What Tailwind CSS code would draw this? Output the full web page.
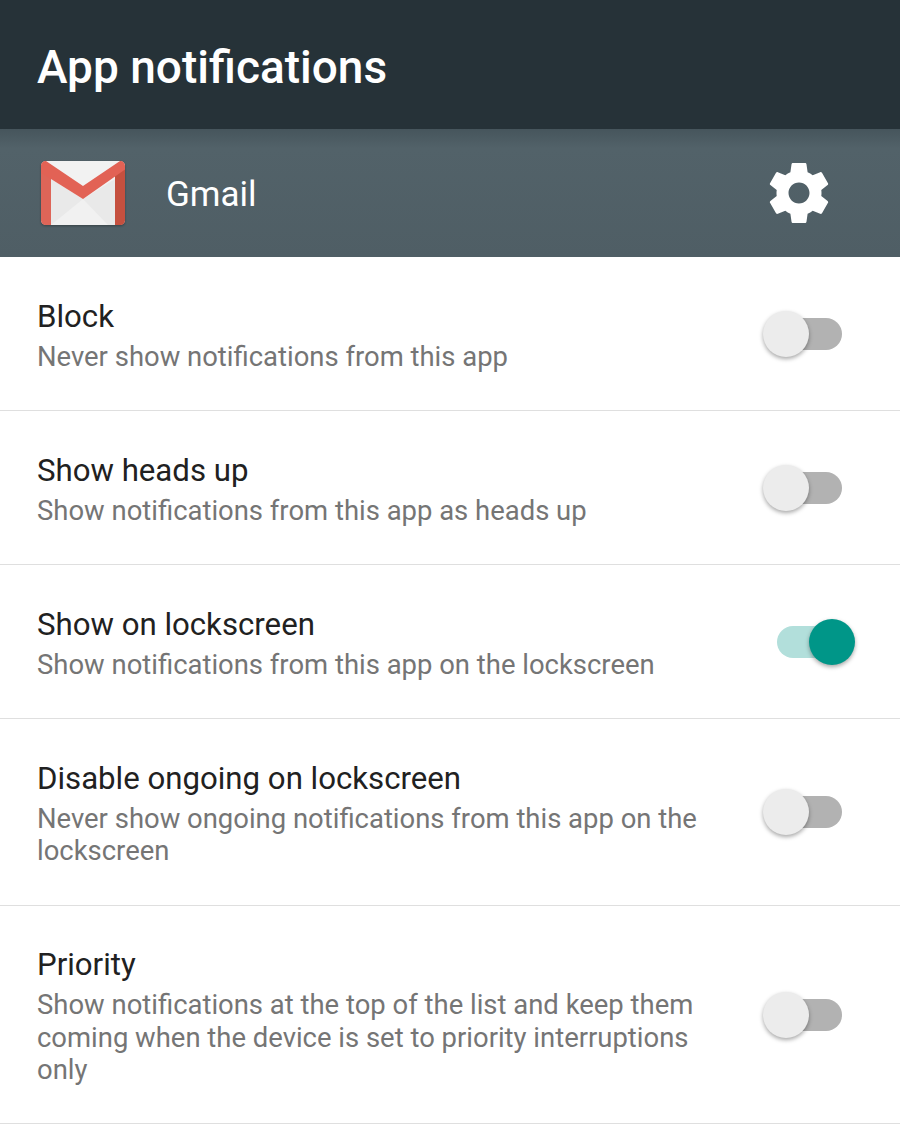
<!DOCTYPE html>
<html lang="en">
<head>
  <meta charset="UTF-8" />
  <meta name="viewport" content="width=device-width, initial-scale=1.0" />
  <title>App notifications</title>
  <script src="https://cdn.jsdelivr.net/npm/@tailwindcss/browser@4"></script>
</head>
<body class="bg-white font-['Roboto',sans-serif] w-[900px] h-[1133px] overflow-hidden">
  <!-- toolbar -->
  <div class="h-[129px] bg-[#263238] flex items-center pl-[37px] pt-[4px]">
    <h1 class="text-[46px] leading-[52px] font-medium text-white">App notifications</h1>
  </div>

  <!-- app header -->
  <div class="h-[128px] bg-[#4f5f66] bg-gradient-to-b from-[#46555c] via-[#526269] via-[15%] to-[#4f5e65] flex items-center pl-[41px] pr-[65px]">
    <svg class="w-[84px] h-[64px] shrink-0 drop-shadow-[0_1px_1px_rgba(0,0,0,0.3)]" viewBox="0 0 84 64">
      <rect x="0" y="0" width="84" height="64" rx="5" fill="#f2f2f2" />
      <path d="M10 18 L42 38 L74 18 V64 H10 Z" fill="#e9e9e9" />
      <path d="M10 64 L42 38 L67 64 Z" fill="#f1f1f1" />
      <path d="M0 8 H10 V64 H5 C2 64 0 62 0 59 Z" fill="#de6558" />
      <path d="M84 8 H74 V64 H79 C82 64 84 62 84 59 Z" fill="#c5503f" />
      <path d="M0 5 C0 2 2 0 5 0 L42 25 L79 0 C82 0 84 2 84 5 V8.5 L42 38 L0 11.75 Z" fill="#e26255" />
    </svg>
    <span class="ml-[41px] pt-[4px] text-[35px] leading-[40px] text-white">Gmail</span>
    <svg class="ml-auto w-[72px] h-[72px] fill-white" viewBox="0 0 24 24">
      <path d="M19.43 12.98c.04-.32.07-.64.07-.98s-.03-.66-.07-.98l2.11-1.65c.19-.15.24-.42.12-.64l-2-3.46c-.12-.22-.39-.3-.61-.22l-2.49 1c-.52-.4-1.08-.73-1.69-.98l-.38-2.65C14.46 2.18 14.25 2 14 2h-4c-.25 0-.46.18-.49.42l-.38 2.65c-.61.25-1.17.59-1.69.98l-2.49-1c-.23-.09-.49 0-.61.22l-2 3.46c-.13.22-.07.49.12.64l2.11 1.65c-.04.32-.07.65-.07.98s.03.66.07.98l-2.11 1.65c-.19.15-.24.42-.12.64l2 3.46c.12.22.39.3.61.22l2.49-1c.52.4 1.08.73 1.69.98l.38 2.65c.03.24.24.42.49.42h4c.25 0 .46-.18.49-.42l.38-2.65c.61-.25 1.17-.59 1.69-.98l2.49 1c.23.09.49 0 .61-.22l2-3.46c.12-.22.07-.49-.12-.64l-2.11-1.65zM12 15.5c-1.93 0-3.5-1.57-3.5-3.5s1.57-3.5 3.5-3.5 3.5 1.57 3.5 3.5-1.57 3.5-3.5 3.5z" />
    </svg>
  </div>

  <!-- rows -->
  <div class="h-[154px] border-b border-[#dfdfdf] flex items-center pl-[37px] pr-[58px]">
    <div class="flex-1 pr-[60px] pt-[4px]">
      <div class="text-[31.2px] leading-[40px] text-[#212121]">Block</div>
      <div class="mt-[4px] text-[27.45px] leading-[32.5px] text-[#757575]">Never show notifications from this app</div>
    </div>
    <div class="relative w-[65px] h-[32px] rounded-full bg-[#b2b2b2] shrink-0">
      <div class="absolute left-[-14px] top-[-7px] w-[46px] h-[46px] rounded-full bg-[#ececec] shadow-[0_2px_4px_rgba(0,0,0,0.35)]"></div>
    </div>
  </div>

  <div class="h-[154px] border-b border-[#dfdfdf] flex items-center pl-[37px] pr-[58px]">
    <div class="flex-1 pr-[60px] pt-[4px]">
      <div class="text-[31.2px] leading-[40px] text-[#212121]">Show heads up</div>
      <div class="mt-[4px] text-[27.45px] leading-[32.5px] text-[#757575]">Show notifications from this app as heads up</div>
    </div>
    <div class="relative w-[65px] h-[32px] rounded-full bg-[#b2b2b2] shrink-0">
      <div class="absolute left-[-14px] top-[-7px] w-[46px] h-[46px] rounded-full bg-[#ececec] shadow-[0_2px_4px_rgba(0,0,0,0.35)]"></div>
    </div>
  </div>

  <div class="h-[154px] border-b border-[#dfdfdf] flex items-center pl-[37px] pr-[58px]">
    <div class="flex-1 pr-[60px] pt-[4px]">
      <div class="text-[31.2px] leading-[40px] text-[#212121]">Show on lockscreen</div>
      <div class="mt-[4px] text-[27.45px] leading-[32.5px] text-[#757575]">Show notifications from this app on the lockscreen</div>
    </div>
    <div class="relative w-[65px] h-[32px] rounded-full bg-[#b2dfdb] shrink-0">
      <div class="absolute right-[-13px] top-[-7px] w-[46px] h-[46px] rounded-full bg-[#009688] shadow-[0_2px_4px_rgba(0,0,0,0.35)]"></div>
    </div>
  </div>

  <div class="h-[187px] border-b border-[#dfdfdf] flex items-center pl-[37px] pr-[58px]">
    <div class="flex-1 pr-[60px] pt-[2px]">
      <div class="text-[31.2px] leading-[40px] text-[#212121]">Disable ongoing on lockscreen</div>
      <div class="mt-[4px] text-[27.45px] leading-[32.5px] text-[#757575]">Never show ongoing notifications from this app on the lockscreen</div>
    </div>
    <div class="relative w-[65px] h-[32px] rounded-full bg-[#b2b2b2] shrink-0">
      <div class="absolute left-[-14px] top-[-7px] w-[46px] h-[46px] rounded-full bg-[#ececec] shadow-[0_2px_4px_rgba(0,0,0,0.35)]"></div>
    </div>
  </div>

  <div class="h-[218px] border-b border-[#dfdfdf] flex items-center pl-[37px] pr-[58px]">
    <div class="flex-1 pr-[60px] pt-[3px]">
      <div class="text-[31.2px] leading-[40px] text-[#212121]">Priority</div>
      <div class="mt-[4px] text-[27.45px] leading-[32.5px] text-[#757575]">Show notifications at the top of the list and keep them coming when the device is set to priority interruptions only</div>
    </div>
    <div class="relative w-[65px] h-[32px] rounded-full bg-[#b2b2b2] shrink-0">
      <div class="absolute left-[-14px] top-[-7px] w-[46px] h-[46px] rounded-full bg-[#ececec] shadow-[0_2px_4px_rgba(0,0,0,0.35)]"></div>
    </div>
  </div>
</body>
</html>
